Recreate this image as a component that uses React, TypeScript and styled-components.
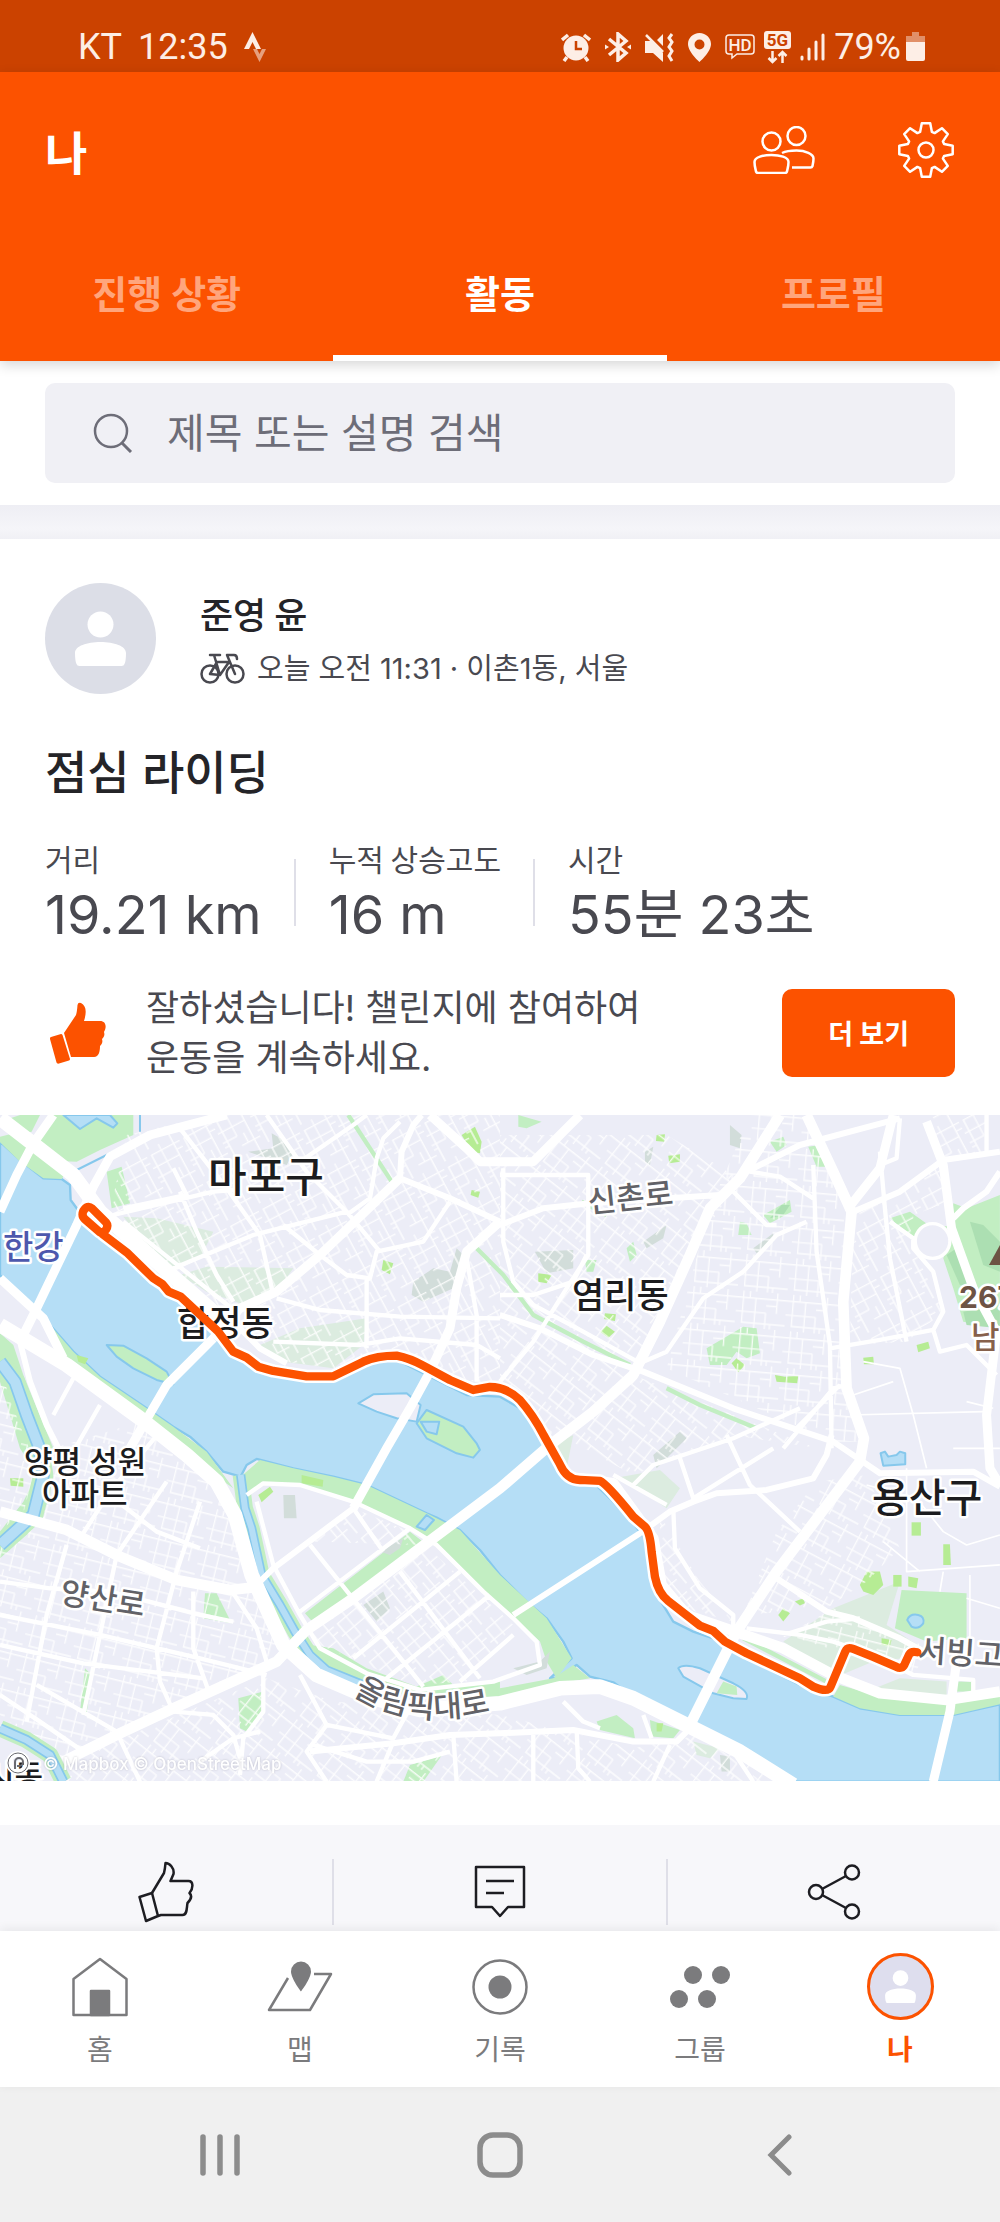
import React from "react";
import styled, { createGlobalStyle, css } from "styled-components";

const ORANGE = "#fc5200";
const sans = `"Inter", "Noto Sans CJK KR", sans-serif`;
const korean = `"Noto Sans CJK KR", sans-serif`;

const GlobalStyle = createGlobalStyle`
  *, *::before, *::after { box-sizing: border-box; }
  body { margin: 0; background: #f0f0f0; font-family: ${korean}; color: #242428; }
  h1, h2, p, dl, dd, dt { margin: 0; }
  button { border: 0; background: none; padding: 0; font: inherit; color: inherit; cursor: pointer; }
  a { color: inherit; text-decoration: none; }
  svg { display: block; flex: none; }
`;

const Screen = styled.div`
  display: flex;
  flex-direction: column;
  width: 100%;
  min-height: 100vh;
  background: #fff;
`;

/* ---------- status bar ---------- */

const StatusBar = styled.div`
  display: flex;
  align-items: center;
  justify-content: space-between;
  padding: 26px 75px 4px 78px;
  background: #cb4200;
  color: #fdeee6;
  font: 400 36px/42px Roboto, sans-serif;
`;

const StatusGroup = styled.div<{ $gap: number }>`
  display: flex;
  align-items: center;
  gap: ${(p) => p.$gap}px;
`;

/* ---------- header ---------- */

const Header = styled.header`
  position: relative;
  background: ${ORANGE};
  color: #fff;
  box-shadow: 0 4px 12px rgba(0, 0, 0, 0.16);
`;

const TitleRow = styled.div`
  display: flex;
  align-items: center;
  padding: 49px 45px;
`;

const PageTitle = styled.h1`
  flex: 1;
  font-size: 46px;
  line-height: 56px;
  font-weight: 700;
`;

const HeaderActions = styled.div`
  display: flex;
  align-items: center;
  gap: 80px;
`;

const Tabs = styled.nav`
  display: flex;
`;

const Tab = styled.button<{ $active?: boolean }>`
  flex: 1;
  padding: 41px 0 36px;
  font-family: ${sans};
  font-size: 38px;
  line-height: 50px;
  font-weight: 700;
  color: ${(p) => (p.$active ? "#fff" : "#ffa57c")};
  border-bottom: 6px solid ${(p) => (p.$active ? "#fff" : "transparent")};
`;

/* ---------- search ---------- */

const SearchArea = styled.div`
  padding: 22px 45px;
`;

const SearchBox = styled.label`
  display: flex;
  align-items: center;
  gap: 34px;
  padding: 20px 48px;
  border-radius: 10px;
  background: #f0f0f5;
  color: #6d6d78;
`;

const SearchInput = styled.input`
  flex: 1;
  min-width: 0;
  height: 60px;
  padding: 0;
  border: 0;
  outline: 0;
  background: none;
  font: 400 41px/60px ${sans};
  color: #6d6d78;
  &::placeholder { color: #6d6d78; opacity: 1; }
`;

const Band = styled.div`
  height: 34px;
  background: linear-gradient(#eeeef4, #f5f5f9 70%, #f0f0f5);
`;

/* ---------- activity card ---------- */

const Card = styled.article`
  padding-top: 44px;
`;

const CardBody = styled.div`
  padding: 0 45px;
`;

const Author = styled.div`
  display: flex;
  align-items: center;
  gap: 44px;
`;

const AuthorText = styled.div`
  display: flex;
  flex-direction: column;
  gap: 6px;
  padding-top: 4px;
`;

const AuthorName = styled.a`
  font-size: 36px;
  line-height: 50px;
  font-weight: 500;
`;

const Meta = styled.div`
  display: flex;
  align-items: center;
  gap: 11px;
  font-family: ${sans};
  font-size: 29px;
  line-height: 50px;
  color: #494950;
`;

const ActivityTitle = styled.h2`
  margin-top: 48px;
  font-family: ${sans};
  font-size: 46px;
  line-height: 60px;
  font-weight: 500;
`;

const Stats = styled.dl`
  display: flex;
  align-items: center;
  margin-top: 36px;
  color: #494950;
`;

const Stat = styled.div`
  display: flex;
  flex-direction: column;
  gap: 7px;
  & + & {
    margin-left: 32px;
    padding-left: 35px;
    background: linear-gradient(#dfdfe8, #dfdfe8) left 0 top 21px / 2px 67px no-repeat;
  }
`;

const StatLabel = styled.dt`
  font-size: 30px;
  line-height: 40px;
`;

const StatValue = styled.dd`
  font-family: ${sans};
  font-size: 54px;
  line-height: 60px;
  white-space: nowrap;
`;

const Cheer = styled.div`
  display: flex;
  align-items: center;
  gap: 40px;
  margin: 38px 0 32px;
  padding-left: 4px;
`;

const CheerText = styled.p`
  flex: 1;
  font-family: ${sans};
  font-size: 36px;
  line-height: 50px;
  color: #494950;
`;

const MoreButton = styled.button`
  padding: 24px 46px;
  border-radius: 10px;
  background: ${ORANGE};
  color: #fff;
  font-size: 27px;
  line-height: 40px;
  font-weight: 700;
`;

const MapFigure = styled.figure`
  margin: 0 0 44px;
  overflow: hidden;
  svg { width: 100%; height: auto; }
`;

const Actions = styled.div`
  display: flex;
  padding: 34px 0 6px;
  background: #f7f7fa;
`;

const Action = styled.button`
  flex: 1;
  display: flex;
  align-items: center;
  justify-content: center;
  height: 66px;
  & + & { border-left: 2px solid #dfdfe8; }
`;

/* ---------- bottom bars ---------- */

const BottomNav = styled.nav`
  position: relative;
  display: flex;
  padding: 22px 0 19px;
  background: #fff;
  box-shadow: 0 -2px 10px rgba(0, 0, 0, 0.07);
`;

const NavItem = styled.a<{ $active?: boolean }>`
  flex: 1;
  display: flex;
  flex-direction: column;
  align-items: center;
  gap: 8px;
  font-size: 28px;
  line-height: 40px;
  color: #7b7b7d;
  ${(p) => p.$active && css`
    color: ${ORANGE};
    font-weight: 700;
  `}
`;

const NavIcon = styled.span`
  display: flex;
  align-items: center;
  justify-content: center;
  height: 67px;
`;

const SystemNav = styled.nav`
  flex: 1;
  display: flex;
  align-items: center;
  min-height: 133px;
  padding: 0 80px;
  background: #f0f0f0;
`;

const SystemButton = styled.button`
  flex: 1;
  display: flex;
  justify-content: center;
`;

/* ---------- icons ---------- */

const StravaMark = () => (
  <svg width="22" height="30" viewBox="0 0 22 30" fill="currentColor">
    <path d="M0 17 8.500 0 17 17H12L8.500 10 5 17z" />
    <path d="M9 17h4l2.500 5 2.500-5h4l-6.500 13z" opacity=".55" />
  </svg>
);

const AlarmIcon = () => (
  <svg width="30" height="29" viewBox="0 0 30 29" fill="none">
    <circle cx="15" cy="15" r="12.500" fill="currentColor" />
    <path d="M15 8v8h6" stroke="#cb4200" strokeWidth="2.500" />
    <path d="M1 7 7 2M29 7l-6-5M6 24l-3 4M24 24l3 4" stroke="currentColor" strokeWidth="3.500" />
  </svg>
);

const BluetoothIcon = () => (
  <svg width="26" height="30" viewBox="0 0 26 30" fill="none" stroke="currentColor" strokeWidth="3.500">
    <path d="M4 7l17 14-8 7V2l8 7L4 23" />
    <path d="M0 12.500l4 2.500-4 2.500zM26 12.500 22 15l4 2.500z" fill="currentColor" stroke="none" />
  </svg>
);

const MuteIcon = () => (
  <svg width="29" height="29" viewBox="0 0 29 29" fill="none">
    <path d="M0 8h6L18 20v9L8 20H0zM18 1v12l-6-6z" fill="currentColor" />
    <path d="M1 2l17 17" stroke="currentColor" strokeWidth="2.500" />
    <path d="M27 1l-3 4 3 4-3 5 3 4-3 5 3 5" stroke="currentColor" strokeWidth="3" />
  </svg>
);

const PinIcon = () => (
  <svg width="23" height="29" viewBox="0 0 23 29">
    <path
      fill="currentColor"
      fillRule="evenodd"
      d="M11.500 0C5 0 0 5 0 11c0 8 11.500 18 11.500 18S23 19 23 11C23 5 18 0 11.500 0zm0 6.500a5 5 0 1 1 0 10 5 5 0 0 1 0-10z"
    />
  </svg>
);

const HdIcon = () => (
  <svg width="30" height="26" viewBox="0 0 30 26" fill="none">
    <path d="M4 1h22q3 0 3 3v13q0 3-3 3H12l-5 4v-4H4q-3 0-3-3V4q0-3 3-3z" stroke="currentColor" strokeWidth="1.500" />
    <text x="15" y="16.500" textAnchor="middle" fontFamily="Roboto" fontSize="17" fontWeight="500" fill="currentColor">HD</text>
  </svg>
);

const FiveGIcon = () => (
  <svg width="27" height="33" viewBox="0 0 27 33" fill="none">
    <rect width="27" height="18" rx="3" fill="currentColor" />
    <text x="13.500" y="15" textAnchor="middle" fontFamily="Roboto" fontSize="17" fontWeight="700" fill="#cb4200">5G</text>
    <path d="M8.500 20v10M4.500 27l4 4 4-4M18.500 32V22M14.500 25l4-4 4 4" stroke="currentColor" strokeWidth="2.500" />
  </svg>
);

const SignalIcon = () => (
  <svg width="25" height="28" viewBox="0 0 25 28" stroke="currentColor" strokeWidth="3" strokeLinecap="round">
    <path d="M2 24v2M9 16v10M16 9v17M23 2v24" />
  </svg>
);

const BatteryIcon = () => (
  <svg width="19" height="30" viewBox="0 0 19 30" fill="currentColor">
    <path d="M6 0h7v4h6v6H0V4h6z" opacity=".45" />
    <path d="M0 10h19v17q0 2-2 2H2q-2 0-2-2z" />
  </svg>
);

const PeopleIcon = () => (
  <svg width="64" height="48" viewBox="0 0 64 48" fill="none" stroke="currentColor" strokeWidth="2.500" strokeLinejoin="round">
    <circle cx="18.500" cy="15.500" r="9" />
    <circle cx="43.500" cy="10" r="9" />
    <path d="M1.500 36c0-5 9-7 17-7s17 2 17 7c0 4-1 7-1.500 9.500q-.5 1.500-2 1.500H5q-1.500 0-2-1.500C2.500 43 1.500 40 1.500 36z" />
    <path d="M29 27c4-2 9-2.500 14.500-2.500 9 0 17 3.500 17 8 0 3-.5 5-1 7.500q-.5 1.500-2 1.500H39" />
  </svg>
);

const gearPath = () => {
  const points: string[] = [];
  for (let tooth = 0; tooth < 8; tooth++) {
    [[-18, 19], [-9, 27], [9, 27], [18, 19]].forEach(([offset, radius]) => {
      const angle = ((tooth * 45 + offset) * Math.PI) / 180;
      points.push(`${(29 + radius * Math.sin(angle)).toFixed(1)} ${(29 - radius * Math.cos(angle)).toFixed(1)}`);
    });
  }
  return `M${points.join("L")}z`;
};

const GearIcon = () => (
  <svg width="58" height="58" viewBox="0 0 58 58" fill="none" stroke="currentColor" strokeWidth="2.500" strokeLinejoin="round">
    <path d={gearPath()} />
    <circle cx="29" cy="29" r="7.500" />
  </svg>
);

const SearchIcon = () => (
  <svg width="40" height="40" viewBox="0 0 40 40" fill="none" stroke="currentColor" strokeWidth="2.500">
    <circle cx="18" cy="18" r="16" />
    <path d="M29 30l9 9" strokeWidth="3" />
  </svg>
);

const AvatarIcon = ({ size, ring }: { size: number; ring?: boolean }) => (
  <svg width={size} height={size} viewBox="0 0 111 111">
    <circle cx="55.500" cy="55.500" r={ring ? 53 : 55.5} fill={ring ? "#dedeee" : "#dcdee7"} stroke={ring ? ORANGE : "none"} strokeWidth="5" />
    <circle cx="55.500" cy="41.500" r="13" fill="#fff" />
    <path d="M30 70c0-7 12-11 25.500-11S81 63 81 70c0 5-.5 9-1.500 11q-.5 2-3 2h-42q-2.500 0-3-2C30.500 79 30 75 30 70z" fill="#fff" />
  </svg>
);

const BikeIcon = () => (
  <svg width="46" height="33" viewBox="0 0 46 33" fill="none" stroke="currentColor" strokeWidth="2.500" strokeLinejoin="round" strokeLinecap="round">
    <circle cx="10" cy="22" r="8.500" />
    <circle cx="35" cy="22" r="8.500" />
    <path d="M10 22l7-12h12L20 23zM20 23 14 3M10 3h10M35 22 27 3h7q3 0 3 4" />
  </svg>
);

const ThumbSolid = () => (
  <svg width="57" height="62" viewBox="0 0 57 62" fill={ORANGE}>
    <path d="M2 35l10-3q1 0 1.500 1L21 57q0 1-1 1.500L10 61.500q-2 .5-2.500-1L1 37q-.5-1.500 1-2z" />
    <path d="M15 31 27 13q1-3 1.500-10Q29 0 32 1c5 3 6 8 3 18h16c6 0 7 6 4 11 1 3 0 5-2 7 1 3 0 5-2 7 0 5-1 11-6 11H22z" />
  </svg>
);

const ThumbOutline = () => (
  <svg width="56" height="62" viewBox="0 0 56 62" fill="none" stroke="#1d1d22" strokeWidth="2.500" strokeLinejoin="round">
    <path d="M1.500 36 14 32l6 23-12 5z" />
    <path d="M14 32 26 12q1-4 1.500-10c4 0 9 5 8 11l-3 7h18c5 0 5 7 1 12 3 3 1 7-2 10-1 5 0 12-5 12H23l-3 1" />
  </svg>
);

const CommentIcon = () => (
  <svg width="52" height="54" viewBox="0 0 52 54" fill="none" stroke="#1d1d22" strokeWidth="2.500" strokeLinejoin="round">
    <path d="M2 2h48v40H34l-8 9-8-9H2z" />
    <path d="M12 16h28M12 28h18" />
  </svg>
);

const ShareIcon = () => (
  <svg width="54" height="58" viewBox="0 0 54 58" fill="none" stroke="#1d1d22" strokeWidth="2.500">
    <circle cx="9" cy="29" r="7" />
    <circle cx="45" cy="9.500" r="7" />
    <circle cx="45" cy="48.500" r="7" />
    <path d="M15 26l24-13M15 32l24 13" />
  </svg>
);

const HomeIcon = () => (
  <svg width="56" height="60" viewBox="0 0 56 60" fill="none" stroke="currentColor" strokeWidth="2.500" strokeLinejoin="round">
    <path d="M1.500 22 28 2l26.500 20v36h-53z" />
    <path d="M19 34h18v24H19z" fill="currentColor" />
  </svg>
);

const MapsIcon = () => (
  <svg width="66" height="54" viewBox="0 0 66 54" fill="none" stroke="currentColor" strokeWidth="2.500" strokeLinejoin="round">
    <path d="M47 14h17L43 50H2l19-32" />
    <path d="M34 1.500A10 10 0 0 0 24 11.500c0 7 10 20 10 20s10-13 10-20A10 10 0 0 0 34 1.500z" fill="currentColor" stroke="none" />
  </svg>
);

const RecordIcon = () => (
  <svg width="56" height="56" viewBox="0 0 56 56" fill="none" stroke="currentColor" strokeWidth="2.500">
    <circle cx="28" cy="28" r="26.500" />
    <circle cx="28" cy="28" r="11.500" fill="currentColor" stroke="none" />
  </svg>
);

const GroupsIcon = () => (
  <svg width="60" height="42" viewBox="0 0 60 42" fill="currentColor">
    <circle cx="23" cy="9" r="9" />
    <circle cx="51" cy="9" r="9" />
    <circle cx="9" cy="33" r="9" />
    <circle cx="37" cy="33" r="9" />
  </svg>
);

const RecentsIcon = () => (
  <svg width="40" height="42" viewBox="0 0 40 42" stroke="#8c8c8c" strokeWidth="5.500" strokeLinecap="round">
    <path d="M3 3v36M20 3v36M37 3v36" />
  </svg>
);

const HomeKeyIcon = () => (
  <svg width="46" height="46" viewBox="0 0 46 46" fill="none" stroke="#8c8c8c" strokeWidth="5.500">
    <rect x="3" y="3" width="40" height="40" rx="13" />
  </svg>
);

const BackIcon = () => (
  <svg width="26" height="42" viewBox="0 0 26 42" fill="none" stroke="#8c8c8c" strokeWidth="5" strokeLinecap="round">
    <path d="M22 3 4 21l18 18" />
  </svg>
);

/* ---------- map ---------- */

const LAND = "#ecedf7";
const WATER = "#b5def6";
const SHORE = "#86c8ec";
const PARK = "#c2eec2";
const PALE = "#dcece0";
const FIELD = "#b6ec94";
const SCRUB = "#d2ddda";
const HILL = "#acdfb2";

const river =
  "M0 80 60 135 130 190 185 192 210 210 212 255 245 300 320 365 460 490 500 530 560 560 660 665 700 715 780 760 920 790 1000 790 1090 745 1180 730 1300 790 1400 840 1500 845 1560 880 1600 930 1640 1010 1690 1090 1790 1112 1830 1150 1900 1225 1935 1270 1950 1370 1965 1430 2020 1520 2080 1550 2140 1570 2200 1610 2400 1710 2500 1745 2580 1780 2700 1800 2860 1800 3000 1768V2000H2380L2200 1900 2070 1825 1900 1745 1840 1702 1770 1685 1730 1650 1670 1690 1650 1690 1715 1630 1690 1580 1640 1510 1580 1460 1500 1380 1440 1305 1380 1245 1310 1208 1280 1195 1100 1110 1000 1085 880 1060 770 1032 740 1050 722 1085 670 1070 620 1010 570 965 520 935 440 880 300 785 220 710 150 630 100 590 0 480z";

const parks = [
  "M160 0H400V60L300 105 230 140 170 138 110 85z",
  "M0 20 60 0H120L95 50 40 60z",
  "M0 65 60 50 110 105 200 170 185 192 130 190 60 140 0 82z",
  "M320 170 365 155 390 265 335 280z",
  "M150 630 220 710 300 785 440 880 520 935 620 1010 700 1120 600 1050 440 940 220 790 170 710z",
  "M0 655 40 690 70 780 115 890 160 1000 150 1150 90 1250 0 1330V1250L70 1160 110 1080 60 1000 0 800z",
  "M320 690 370 692 440 730 500 770 520 808 470 795 400 760 350 725z",
  "M1250 925 1280 885 1390 935 1430 985 1440 1005 1420 1028 1370 1015 1280 970z",
  "M722 1085 780 1035 880 1060 1000 1085 1100 1110 1280 1195 1380 1245 1500 1380 1640 1510 1715 1630 1670 1690 1640 1640 1620 1580 1540 1510 1450 1430 1310 1290 1230 1240 1060 1160 900 1105 790 1105 740 1140z",
  "M915 1495 1230 1250 1275 1285 950 1535z",
  "M930 1590 1000 1600 1100 1660 1250 1715 1330 1680 1360 1710 1500 1700V1745L1250 1750 1100 1710 960 1650z",
  "M740 1190 765 1200 790 1350 890 1530 870 1530 780 1380z",
  "M615 1435 650 1435 695 1525 610 1510z",
  "M255 1660 275 1680 260 1795 240 1790z",
  "M715 1750 790 1730 785 1810 740 1850 720 1840z",
  "M1230 1950 1325 1922 1270 2000H1210z",
  "M1720 1650 1770 1690 1650 1710 1500 1745V1720L1660 1690z",
  "M1790 1820 1850 1800 1900 1840 1905 1870 1800 1845z",
  "M1950 1815 2040 1845 2020 1870 1955 1865z",
  "M2640 1745 2850 1755 3000 1735V1768L2860 1800 2700 1800 2580 1780 2500 1745 2520 1710z",
  "M2705 1425 2900 1435V1570L2780 1580 2685 1540z",
  "M2120 700 2230 635 2270 640 2280 715 2240 730 2210 710 2180 750 2130 750z",
  "M2860 265 2900 280 3000 240V640L2890 620 2860 520 2830 430 2860 350z",
  "M2670 310 2730 290 2800 340 2860 330 2840 370 2780 340 2740 370z",
  "M2290 300 2370 255 2375 290 2310 325z",
  "M2425 95 2460 90 2485 155 2450 155z",
  "M1900 380 1910 420 1890 440 1880 400z",
  "M1755 435 1790 435 1780 470 1760 470z",
  "M1555 0 1625 20 1580 40 1555 35z",
  "M2310 80 2350 65 2360 90 2330 110z",
  "M2220 320 2240 325 2255 360 2215 360z",
  "M2870 1700 2920 1700 2920 1730 2870 1730z",
];

const pales = [
  "M370 305 470 310 640 350 600 430 520 460 440 390z",
  "M540 480 620 455 880 460 830 530 720 565 620 530z",
  "M780 690 900 640 1100 610 1090 690 1000 760 850 740z",
  "M1840 1090 1980 1065 2040 1120 2000 1180 1900 1110z",
  "M1800 920 1720 960 1700 1060 1640 1000z",
  "M2350 1580 2500 1480 2700 1400 2660 1530 2800 1620 2620 1640 2500 1690z",
  "M2600 1730 2700 1690 2840 1700 2840 1740 2700 1750z",
  "M2080 1880 2160 1900 2130 1930 2090 1920z",
];

const scrubs = [
  "M745 110 820 100 815 55 860 80 880 115 860 150 800 130z",
  "M1605 410 1720 405 1720 460 1640 475z",
  "M1240 500 1300 460 1350 470 1370 400 1390 420 1360 520 1270 560 1235 540z",
  "M850 1140 885 1140 890 1210 852 1210z",
  "M1090 1470 1150 1430 1170 1480 1130 1520z",
  "M1140 1310 1210 1270 1200 1300 1170 1320z",
  "M2260 400 2320 355 2320 380 2270 415z",
  "M1930 380 2000 330 1990 370 1940 400z",
  "M1540 1660 1620 1640 1650 1610 1640 1660 1580 1680z",
  "M1960 1020 2040 950 2060 970 1970 1060z",
  "M2160 1920 2190 1925 2190 1970 2165 1970z",
  "M1935 110 1960 95 1950 150 1935 140z",
  "M2190 30 2225 60 2220 100 2190 90z",
];

const hills = [
  "M2840 420 2870 400 2900 440 2930 520 2880 510z",
  "M2890 590 3000 570V640L2900 630z",
  "M2910 320 2950 330 3000 380V470L2950 450z",
  "M2310 310 2345 270 2370 270 2350 300z",
];

const fields = [
  "M1385 60 1425 35 1445 80 1440 115 1415 110z",
  "M1150 435 1180 445 1170 478 1145 465z",
  "M1415 225 1440 230 1435 248 1412 240z",
  "M1970 60 1995 58 1993 80 1968 78z",
  "M2005 122 2040 118 2040 140 2008 145z",
  "M1615 475 1655 480 1640 505 1615 500z",
  "M1815 595 1848 598 1845 618 1812 612z",
  "M1800 650 1820 632 1845 650 1825 668z",
  "M2195 745 2210 730 2235 750 2215 772z",
  "M2325 780 2355 785 2395 782 2392 805 2330 800z",
  "M2590 728 2620 725 2622 748 2592 748z",
  "M2750 690 2785 680 2790 700 2755 712z",
  "M2735 1222H2763V1262H2735z",
  "M2830 1288H2850L2853 1350H2830z",
  "M2580 1410 2600 1370 2640 1370 2650 1410 2620 1440 2590 1430z",
  "M2680 1380 2705 1380 2705 1415 2680 1415z",
  "M2725 1385 2755 1390 2750 1420 2725 1415z",
  "M2335 1500 2350 1480 2370 1495 2350 1520z",
  "M2385 1460 2410 1450 2415 1465 2400 1472z",
  "M2645 1570 2675 1575 2670 1595 2645 1590z",
  "M905 1080 970 1095 968 1115 905 1105z",
  "M775 1140 810 1115 820 1130 785 1162z",
  "M1970 1825 1990 1825 1985 1850 1970 1850z",
  "M230 720 265 730 255 748 235 740z",
  "M30 1090 70 1090 70 1115 32 1112z",
];

const roads: Record<string, string[]> = {
  "44": [
    "M0 630 200 750 420 910 560 1020 650 1100 705 1200 755 1380 850 1590 950 1680 1100 1745 1260 1785 1500 1765 1680 1720 1800 1715 1900 1750 2070 1835 2220 1910 2380 2010",
    "M0 10 110 95 220 180 300 290 380 360 520 485 640 590 720 660",
  ],
  "32": [
    "M2340 0 2220 190 2130 280 2070 420 1980 620 1900 780 1780 890 1650 990 1500 1120 1300 1270 1060 1450 920 1545 830 1640 520 1780 350 1860 190 1940",
    "M2060 1850 2210 1550 2330 1370 2580 1040 2592 970 2540 820 2530 560 2555 290 2500 170 2420 0",
    "M1700 1085 1840 1105 1960 1270 1985 1410 2060 1500 2220 1555 2350 1600 2500 1680 2640 1735 2840 1755 3000 1730",
    "M0 1190 200 1245 360 1325 530 1395 690 1425 780 1415",
  ],
  "27": [
    "M160 0 100 85 50 180 0 290",
    "M680 0 450 60 330 125 280 215 230 330 110 580 60 680",
    "M0 490 130 610 190 730",
    "M1500 320 1400 410 1370 520 1350 640 1290 770 1230 880 1160 1000 1060 1180",
    "M640 670 500 810 430 930 390 1000",
    "M1290 0 1400 100 1440 140 1600 140 1740 0",
    "M2545 280 2640 160 2680 0",
    "M2870 1640 2850 1790 2800 2000",
    "M640 670 720 580 830 530 960 420 1200 190",
    "M2780 20 2830 150 2855 340 2920 520 2990 650 2960 900 2970 1060 3000 1110",
  ],
  "18": [
    "M1200 190 1205 110 1240 30 1265 0",
    "M1200 190 1350 250 1500 320",
    "M1500 330 1630 280 1770 265 2160 240",
    "M2220 180 2400 90 2700 10",
    "M2560 290 2700 230 2830 135 3000 110",
    "M2860 310 2890 280 2960 230 3000 170",
    "M1060 1180 940 1270 820 1360 780 1400",
    "M1920 1255 1540 1500",
    "M1920 1255 2010 1190 2080 1160 2150 1135 2300 1125 2440 1090 2480 1020 2495 960",
    "M1500 600 1620 640 1780 720 1930 770 2200 880 2500 980 2640 1075 2920 1070 3000 1115",
    "M2330 1390 2480 1490 2560 1510 2700 1570 2790 1620",
    "M930 1910 1180 1885 1350 1860 1500 1855 1720 1845 1900 1880 2030 1880 2070 1840",
    "M60 680 90 800 140 930 180 1010",
    "M700 620 780 700 860 745",
  ],
  "13": [
    "M340 300 640 230 700 225",
    "M520 460 760 360 1040 290",
    "M370 320 520 440 720 600",
    "M540 40 680 220 780 360 820 540",
    "M800 0 920 170 1040 290 1140 410",
    "M540 230 590 350 650 480 700 560",
    "M520 160 560 240 370 280",
    "M830 550 960 585 1200 605 1500 610",
    "M820 680 1080 690 1200 670 1430 690 1500 730",
    "M1100 490 1100 700",
    "M850 330 960 420 1040 480 1110 490 1130 410 1270 380 1350 260",
    "M1130 130 1150 70 1200 20M1130 130 1110 250 1040 300",
    "M900 140 1060 30 1100 0",
    "M1430 800V600L1400 430",
    "M1510 160V380L1540 500 1600 570 1750 650 1930 750",
    "M1500 180H1765V420L1700 520 1600 680 1500 800",
    "M1500 540 1600 540 1720 500 1760 420",
    "M1510 330 1500 320",
    "M2440 150 2450 410 2490 690 2495 1000",
    "M2250 170 2340 185 2440 250",
    "M2190 220 2300 330 2330 330",
    "M2420 320 2330 360 2230 470 2110 550 2000 710 1930 740",
    "M2640 110 2655 280 2670 430 2720 680",
    "M2490 700 2640 675 2800 645 2830 590 2800 470 2740 400 2740 370 2670 320",
    "M2800 645 2820 710 2900 690 2990 780",
    "M2350 1000 2500 820 2540 810M2380 950 2520 810",
    "M2020 1180 2025 1300 2100 1420 2200 1500V1540",
    "M1840 1080 2000 1170",
    "M1900 1110 1960 1050 2200 970 2400 880",
    "M2180 960 2250 1110 2400 1250",
    "M2040 1030 2080 1150 2320 1000",
    "M2240 1540 2400 1560 2500 1580 2620 1620 2740 1680 2920 1695V1730",
    "M2350 1560 2480 1520 2580 1510",
    "M740 1140 790 1105 900 1110 1060 1160 1230 1240 1310 1290 1450 1430 1540 1510 1610 1580 1620 1650 1480 1700 1260 1725 1100 1675 960 1600 900 1500 820 1350 770 1160",
    "M930 1290 1270 1715",
    "M1060 1180 1150 1310",
    "M1200 1370 1440 1690",
    "M1060 1630 1380 1370",
    "M1160 1690 1470 1440",
    "M900 1490 1230 1240",
    "M1380 1700 1540 1560",
    "M0 1500 300 1560 600 1630 800 1680",
    "M0 1590 250 1645 610 1690",
    "M0 1400 150 1420 330 1430 600 1500 700 1520",
    "M80 1820 140 1500 200 1290",
    "M250 1800 300 1560 350 1320 500 1100",
    "M470 1600 530 1370 600 1160",
    "M470 1600 480 1700 520 1790",
    "M580 1430V1600L630 1740",
    "M690 1420 770 1540 800 1640",
    "M340 1150 470 1250 600 1300",
    "M240 1270 330 1130 480 950",
    "M0 1740 120 1820 250 1910",
    "M110 1710 350 1850 420 2000",
    "M790 1670V1790L730 1870 720 1980",
    "M900 1680 980 1830 920 1910 980 2000",
    "M980 1830 1180 1870 1240 1760",
    "M520 1790 640 1800 700 1860 720 1930",
    "M600 1940 700 1870 780 1850",
    "M1180 1880 1130 2000M1360 1860 1370 2000",
    "M1730 1840 1735 1960 1770 2000M2010 1890 1960 2000M1600 1860V2000",
    "M940 1890 1100 1940 1240 1940 1350 1910",
    "M1690 1760 1750 1820 1800 1840M1930 1800 1955 1870",
    "M2200 1910 2260 2000",
    "M2960 0V110M2700 10 2690 130 2640 150",
    "M60 680 200 750M160 900 220 790M300 870 180 1080",
  ],
};

const meshes = [
  { d: "M380 60 640 0H1500V820L1300 770 1180 710 1090 730 1000 760 860 740 520 460 330 290z", fill: "url(#meshA)" },
  { d: "M1500 60H2000L2220 190 2050 450 1900 780 1660 980 1500 820z", fill: "url(#meshB)" },
  { d: "M2250 0H2430L2510 200 2550 300 2530 800 2600 980 2500 980 2000 760 2130 280z", fill: "url(#meshC)" },
  { d: "M2560 300 2700 230 2830 130 2780 0 2960 0V110L2830 150 2850 260 2740 300 2740 400 2830 590 2720 680 2550 690z", fill: "url(#meshA)" },
  { d: "M1680 960 1900 780 2450 1000 2200 960 1900 1080z", fill: "url(#meshB)" },
  { d: "M0 760 160 1000 420 920 660 1120 760 1400 850 1620 600 1760 190 1940 0 1800z", fill: "url(#meshD)" },
  { d: "M200 1940 800 1690 1000 1760 1500 1800 1900 1900 2100 1860 2340 2000H200z", fill: "url(#meshB)" },
  { d: "M930 1280 1060 1180 1230 1250 1540 1530 1400 1700 1240 1710 960 1590 930 1540 1270 1290z", fill: "url(#meshE)" },
  { d: "M2230 1500 2330 1250 2450 1100 2600 1080 2700 1300 2600 1400 2480 1480z", fill: "url(#meshF)" },
  { d: "M2360 1560 2500 1480 2790 1600 2740 1680z", fill: "url(#meshD)" },
  { d: "M1980 1200 2100 1400 2200 1520 2050 1480 1980 1380z", fill: "url(#meshE)" },
];

const streets = "M0 20H150M0 62H90M60 95H150M20 0V62M58 20V110M90 62V110M122 0V62M20 62V95H58M90 40H122M105 95V110M40 0V20";

const lanes =
  "M2600 1110 2750 1150 2830 1250 2900 1290 3000 1260M2720 1060V1370L3000 1350M2650 1280 2760 1370M2830 1370 2820 1430M2910 1380V1620M2590 740 2700 760 2740 900 2780 1060M2900 860 2980 880M2680 800 2560 840M2900 1450 3000 1480M2860 1000H3000M2550 900 2950 890";

const route =
  "M300 352 254 312Q244 302 250 288 262 268 276 280L318 322Q326 332 318 344L306 356 380 412 460 490 488 508 506 530 542 545 655 650 700 710 740 728 775 755 820 768 920 784H1000L1090 740Q1130 722 1190 722 1230 730 1270 752L1350 795 1420 825 1470 816Q1520 816 1560 855 1600 900 1632 962L1680 1048Q1700 1094 1740 1095L1800 1098Q1820 1106 1900 1205L1935 1235Q1950 1250 1955 1310L1965 1385Q1975 1435 2005 1458L2100 1532 2140 1548 2175 1580 2240 1615 2400 1690 2440 1715Q2485 1735 2492 1715L2536 1610Q2542 1595 2560 1602L2620 1626 2690 1656Q2706 1664 2714 1648L2728 1618Q2734 1608 2752 1612";

const MapText = styled.text<{ $size: number; $color?: string; $weight?: number }>`
  font-family: ${sans};
  font-size: ${(p) => p.$size}px;
  font-weight: ${(p) => p.$weight ?? 500};
  fill: ${(p) => p.$color ?? "#1c1c1e"};
  stroke: #fff;
  stroke-width: 5px;
  stroke-linejoin: round;
  paint-order: stroke;
`;

const Attribution = styled.text`
  font: 500 17px ${sans};
  fill: #fff;
  filter: drop-shadow(0 0 1px rgba(90, 90, 110, 0.3));
`;

const RouteMap = () => (
  <svg viewBox="0 0 1000 666" role="img" aria-label="라이딩 경로 지도">
    <defs>
      {[
        ["meshA", 62], ["meshB", 38], ["meshC", 5], ["meshD", 14], ["meshE", 50], ["meshF", 28],
      ].map(([id, angle]) => (
        <pattern key={id} id={`${id}`} width="150" height="110" patternUnits="userSpaceOnUse" patternTransform={`rotate(${angle})`}>
          <path d={streets} fill="none" stroke="#fff" strokeWidth="4" opacity=".85" />
        </pattern>
      ))}
      <path id="olympic" d="M353 579Q390 604 440 603 480 601 502 592" />
    </defs>
    <rect width="1000" height="666" fill={LAND} />
    <g transform="scale(0.3333)" fill="none" strokeLinejoin="round">
      {pales.map((d) => <path key={d} d={d} fill={PALE} />)}
      <path d={river} fill={WATER} stroke={SHORE} strokeWidth="7" />
      {parks.map((d) => <path key={d} d={d} fill={PARK} />)}
      {scrubs.map((d) => <path key={d} d={d} fill={SCRUB} />)}
      {hills.map((d) => <path key={d} d={d} fill={HILL} />)}
      {fields.map((d) => <path key={d} d={d} fill={FIELD} />)}
      {meshes.map((m) => <path key={m.d} d={m.d} fill={m.fill} />)}
      <path d={lanes} stroke="#fff" strokeWidth="5" />
      <path d="M1045 0 1175 200M1430 400 1510 480 1600 600 1750 680 1890 750M2000 820 2100 870 2270 940M1745 260 1820 300M2230 1570 2480 1700" stroke={PARK} strokeWidth="13" />
      <g fill={WATER} stroke={SHORE} strokeWidth="6">
        <path d="M190 0 240 42 290 10 340 38 352 25 330 0z" />
        <path d="M230 165 350 105M420 0V50" />
        <path d="M1075 865 1120 838 1220 835 1262 870 1250 920 1190 910 1130 890z" fill={LAND} />
        <path d="M1250 925 1280 885 1390 935 1430 985 1440 1005 1420 1028 1370 1015 1280 970z" fill="none" />
        <path d="M1262 920 1318 920 1310 958 1280 950z" />
        <path d="M320 690 370 692 440 730 500 770 520 808 470 795 400 760 350 725z" fill="none" />
        <path d="M2035 1660Q2050 1645 2100 1660L2200 1705Q2250 1730 2240 1752L2200 1750 2140 1735 2050 1685z" fill={LAND} />
        <path d="M2642 1015 2655 1010 2665 1025 2690 1020 2700 1010 2716 1015V1048L2650 1052z" />
        <path d="M2722 1515Q2730 1495 2755 1500 2775 1505 2770 1525 2755 1545 2735 1535z" />
        <path d="M1250 1235 1280 1200 1302 1215 1275 1245z" />
      </g>
      <path d="M2150 1735 2170 1700 2210 1715 2212 1740z" fill={PARK} />
      <circle cx="2798" cy="378" r="52" fill={LAND} stroke="#fff" strokeWidth="10" />
      {[
        { d: "M0 740 45 800 80 900 115 990 130 1080 100 1200 0 1290", w: 34 },
        { d: "M722 1080 735 1180 755 1240 785 1380 840 1470 885 1550 930 1620 980 1665 1090 1710", w: 22 },
        { d: "M0 1840 80 1875 150 1920 190 2000", w: 24 },
      ].map((s) => (
        <g key={s.d}>
          <path d={s.d} stroke={PARK} strokeWidth={s.w + 26} />
          <path d={s.d} stroke={SHORE} strokeWidth={s.w + 6} />
          <path d={s.d} stroke={WATER} strokeWidth={s.w - 4} />
        </g>
      ))}
      {Object.entries(roads).map(([width, list]) => (
        <path key={width} d={list.join("")} stroke="#fff" strokeWidth={width} />
      ))}
      <path d={route} stroke="#fff" strokeWidth="40" strokeLinecap="round" />
    </g>
    <MapText $size={42} x="208" y="77">마포구</MapText>
    <MapText $size={35} x="177" y="221">합정동</MapText>
    <MapText $size={35} x="572" y="193">염리동</MapText>
    <MapText $size={40} x="872" y="397">용산구</MapText>
    <MapText $size={33} $color="#4d58ad" x="3" y="144">한강</MapText>
    <MapText $size={31} x="24" y="358">양평 성원</MapText>
    <MapText $size={31} x="42" y="390">아파트</MapText>
    <MapText $size={31} $color="#626267" x="589" y="98" transform="rotate(-6 589 98)">신촌로</MapText>
    <MapText $size={31} $color="#626267" x="59" y="488" transform="rotate(9 59 488)">양산로</MapText>
    <MapText $size={31} $color="#626267"><textPath href="#olympic">올림픽대로</textPath></MapText>
    <MapText $size={31} $color="#626267" x="917" y="546" transform="rotate(4 917 546)">서빙고로</MapText>
    <MapText $size={30} $weight={700} $color="#6d5344" x="959" y="193">267</MapText>
    <MapText $size={31} $color="#86604b" x="971" y="233">남산</MapText>
    <path d="M989 150l11-20v20z" fill="#6d5344" />
    <MapText $size={31} x="-14" y="672">시동</MapText>
    <circle cx="18" cy="648" r="9" fill="none" stroke="#fff" strokeWidth="6" />
    <circle cx="18" cy="648" r="10" fill="none" stroke="#6a6a70" />
    <path d="M15 654v-7a4 4 0 1 1 4 4h-2" fill="none" stroke="#6a6a70" strokeWidth="2" />
    <Attribution x="43" y="655">© Mapbox © OpenStreetMap</Attribution>
    <path d={route} transform="scale(0.3333)" fill="none" stroke={ORANGE} strokeWidth="25" strokeLinejoin="round" strokeLinecap="round" />
  </svg>
);

/* ---------- page ---------- */

const stats = [
  { label: "거리", value: "19.21 km" },
  { label: "누적 상승고도", value: "16 m" },
  { label: "시간", value: "55분 23초" },
];

const navItems = [
  { label: "홈", icon: <HomeIcon /> },
  { label: "맵", icon: <MapsIcon /> },
  { label: "기록", icon: <RecordIcon /> },
  { label: "그룹", icon: <GroupsIcon /> },
  { label: "나", icon: <AvatarIcon size={67} ring />, active: true },
];

export default function App() {
  return (
    <>
      <GlobalStyle />
      <Screen>
        <StatusBar>
          <StatusGroup $gap={16}>
            <span>KT</span>
            <span>12:35</span>
            <StravaMark />
          </StatusGroup>
          <StatusGroup $gap={9}>
            <StatusGroup $gap={14}>
              <AlarmIcon />
              <BluetoothIcon />
              <MuteIcon />
              <PinIcon />
              <HdIcon />
            </StatusGroup>
            <FiveGIcon />
            <SignalIcon />
            <StatusGroup $gap={5}>
              <span>79%</span>
              <BatteryIcon />
            </StatusGroup>
          </StatusGroup>
        </StatusBar>

        <Header>
          <TitleRow>
            <PageTitle>나</PageTitle>
            <HeaderActions>
              <button aria-label="친구"><PeopleIcon /></button>
              <button aria-label="설정"><GearIcon /></button>
            </HeaderActions>
          </TitleRow>
          <Tabs>
            <Tab>진행 상황</Tab>
            <Tab $active>활동</Tab>
            <Tab>프로필</Tab>
          </Tabs>
        </Header>

        <SearchArea>
          <SearchBox>
            <SearchIcon />
            <SearchInput type="text" aria-label="활동 검색" placeholder="제목 또는 설명 검색" />
          </SearchBox>
        </SearchArea>
        <Band />

        <Card>
          <CardBody>
            <Author>
              <AvatarIcon size={111} />
              <AuthorText>
                <AuthorName href="#profile">준영 윤</AuthorName>
                <Meta>
                  <BikeIcon />
                  <span>오늘 오전 11:31 · 이촌1동, 서울</span>
                </Meta>
              </AuthorText>
            </Author>
            <ActivityTitle>점심 라이딩</ActivityTitle>
            <Stats>
              {stats.map((s) => (
                <Stat key={s.label}>
                  <StatLabel>{s.label}</StatLabel>
                  <StatValue>{s.value}</StatValue>
                </Stat>
              ))}
            </Stats>
            <Cheer>
              <ThumbSolid />
              <CheerText>
                잘하셨습니다! 챌린지에 참여하여
                <br />
                운동을 계속하세요.
              </CheerText>
              <MoreButton>더 보기</MoreButton>
            </Cheer>
          </CardBody>
          <MapFigure>
            <RouteMap />
          </MapFigure>
          <Actions>
            <Action aria-label="좋아요"><ThumbOutline /></Action>
            <Action aria-label="댓글"><CommentIcon /></Action>
            <Action aria-label="공유"><ShareIcon /></Action>
          </Actions>
        </Card>

        <BottomNav>
          {navItems.map((item) => (
            <NavItem key={item.label} href="#" $active={item.active}>
              <NavIcon>{item.icon}</NavIcon>
              {item.label}
            </NavItem>
          ))}
        </BottomNav>
        <SystemNav>
          <SystemButton aria-label="최근 앱"><RecentsIcon /></SystemButton>
          <SystemButton aria-label="홈 화면"><HomeKeyIcon /></SystemButton>
          <SystemButton aria-label="뒤로"><BackIcon /></SystemButton>
        </SystemNav>
      </Screen>
    </>
  );
}
